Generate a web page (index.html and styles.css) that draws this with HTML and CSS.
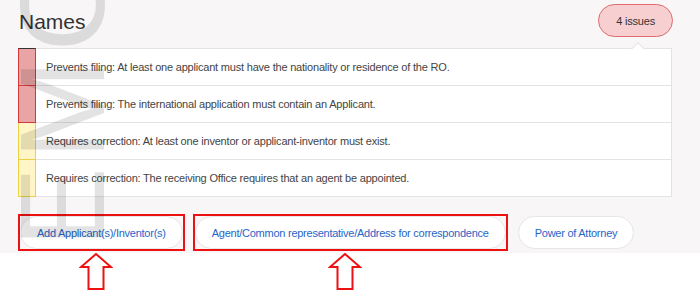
FILE: index.html
```html
<!DOCTYPE html>
<html lang="en">
<head>
    <meta charset="UTF-8">
    <meta name="viewport" content="width=device-width, initial-scale=1.0">
    <title>Names</title>
    <link rel="stylesheet" href="styles.css">
</head>
<body>
    <section class="panel">
        <div class="head">
            <h2>Names</h2>
            <span class="badge">4 issues</span>
        </div>

        <ul class="issues">
            <li class="issue">
                <span class="flag error"></span>
                <span class="msg">Prevents filing: At least one applicant must have the nationality or residence of the RO.</span>
            </li>
            <li class="issue">
                <span class="flag error"></span>
                <span class="msg">Prevents filing: The international application must contain an Applicant.</span>
            </li>
            <li class="issue">
                <span class="flag warn"></span>
                <span class="msg">Requires correction: At least one inventor or applicant-inventor must exist.</span>
            </li>
            <li class="issue">
                <span class="flag warn"></span>
                <span class="msg">Requires correction: The receiving Office requires that an agent be appointed.</span>
            </li>
        </ul>

        <div class="actions">
            <div class="mark on"><button class="pill">Add Applicant(s)/Inventor(s)</button></div>
            <div class="mark on"><button class="pill">Agent/Common representative/Address for correspondence</button></div>
            <div class="mark"><button class="pill">Power of Attorney</button></div>
        </div>

        <div class="watermark">DEMO</div>
    </section>

    <div class="arrows">
        <svg class="arrow" width="34" height="38" viewBox="0 0 34 38">
            <polygon points="17,1 32,14 24.5,14 24.5,36 9.5,36 9.5,14 2,14" />
        </svg>
        <svg class="arrow" width="34" height="38" viewBox="0 0 34 38">
            <polygon points="17,1 32,14 24.5,14 24.5,36 9.5,36 9.5,14 2,14" />
        </svg>
    </div>
</body>
</html>
```

FILE: styles.css
```css
* { margin: 0; padding: 0; box-sizing: border-box; }
body { font-family: "Liberation Sans", Arial, sans-serif; background: #fff; color: #333; overflow: hidden; }

.panel {
    position: relative; overflow: hidden;
    background: #f8f6f7; padding: 0 27px 2px 18px;
}
.head { display: flex; justify-content: space-between; align-items: flex-start; height: 48px; }
.head h2 { font-size: 21px; font-weight: normal; line-height: 1; margin: 11px 0 0 1px; color: #333; }
.badge {
    display: flex; align-items: center; height: 33px; margin-top: 4px;
    padding: 0 17px; background: #f7cfd0; border: 1.5px solid #e06a6c;
    border-radius: 17px; font-size: 11px; letter-spacing: -0.2px; color: #333;
}

.issues { position: relative; list-style: none; background: #fff; border-right: 1px solid #e3e3e3; margin-right: 1px; }
.issues::before {
    content: ""; position: absolute; z-index: 1; right: 28px; top: -4.5px;
    width: 9px; height: 9px; background: #fff;
    border-top: 1px solid #e3e3e3; border-left: 1px solid #e3e3e3;
    transform: rotate(45deg);
}
.issue { display: flex; }
.flag { width: 18px; flex: none; border: 1px solid; border-top: 0; }
.issue:first-child .flag { border-top: 1px solid; }
.flag.error { background: #e9a4a6; border-color: #d2393c; }
.flag.warn { background: #fff5c6; border-color: #e9d145; }
.msg {
    flex: 1; display: flex; align-items: center; height: 37px;
    padding-left: 10px; border-bottom: 1px solid #e3e3e3;
    font-size: 11px; letter-spacing: -0.2px; color: #444;
}
.issue:first-child .msg { border-top: 1px solid #e3e3e3; height: 38px; }

.actions { display: flex; gap: 8px; margin-top: 17px; }
.mark { border: 2px solid transparent; }
.mark.on { border-color: #ee1111; }
.pill {
    display: block; height: 33px; padding: 0 16px;
    background: #fff; border: 1px solid #e6e6e6; border-radius: 17px;
    font-family: inherit; font-size: 11px; letter-spacing: -0.25px; color: #2765c8;
}

/* big rotated "DEMO" stamp over the panel */
.watermark {
    position: absolute; z-index: 2; left: 2px; top: 342px;
    font-size: 120px; line-height: 1; letter-spacing: 8px; white-space: nowrap;
    color: rgba(0, 0, 0, 0.11); pointer-events: none;
    transform-origin: 0 0; transform: rotate(-90deg);
}

.arrows { display: flex; padding-left: 79px; }
.arrow + .arrow { margin-left: 215px; }
.arrow polygon { fill: #fff; stroke: #ee1111; stroke-width: 2; }
```
